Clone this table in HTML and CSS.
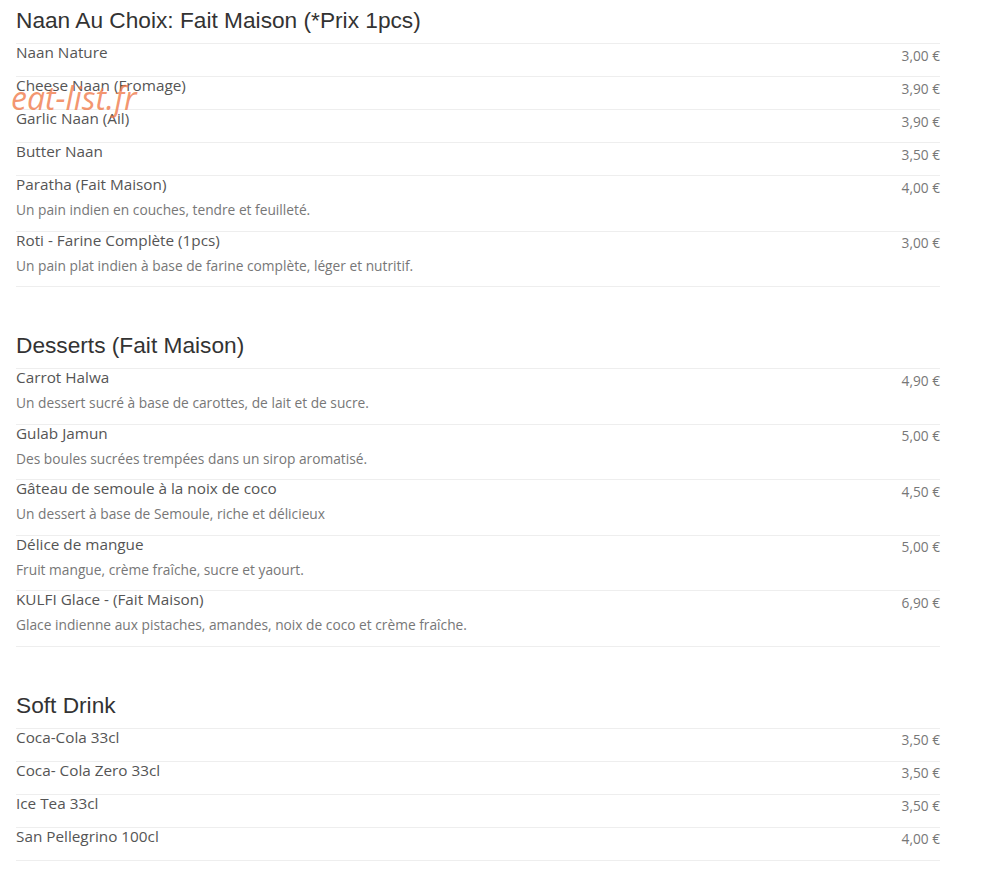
FILE: index.html
```html
<!DOCTYPE html>
<html lang="fr">
<head>
    <meta charset="utf-8">
    <link rel="stylesheet" href="styles.css">
</head>
<body>
    <div id="menu">
        <div class="watermark">eat-list.fr</div>

        <div class="section">
            <h2>Naan Au Choix: Fait Maison (*Prix 1pcs)</h2>
            <div class="item"><div class="info"><div class="name">Naan Nature</div></div><div class="price">3,00 €</div></div>
            <div class="item"><div class="info"><div class="name">Cheese Naan (Fromage)</div></div><div class="price">3,90 €</div></div>
            <div class="item"><div class="info"><div class="name">Garlic Naan (Ail)</div></div><div class="price">3,90 €</div></div>
            <div class="item"><div class="info"><div class="name">Butter Naan</div></div><div class="price">3,50 €</div></div>
            <div class="item"><div class="info"><div class="name">Paratha (Fait Maison)</div><div class="desc">Un pain indien en couches, tendre et feuilleté.</div></div><div class="price">4,00 €</div></div>
            <div class="item"><div class="info"><div class="name">Roti - Farine Complète (1pcs)</div><div class="desc">Un pain plat indien à base de farine complète, léger et nutritif.</div></div><div class="price">3,00 €</div></div>
        </div>

        <div class="section">
            <h2>Desserts (Fait Maison)</h2>
            <div class="item"><div class="info"><div class="name">Carrot Halwa</div><div class="desc">Un dessert sucré à base de carottes, de lait et de sucre.</div></div><div class="price">4,90 €</div></div>
            <div class="item"><div class="info"><div class="name">Gulab Jamun</div><div class="desc">Des boules sucrées trempées dans un sirop aromatisé.</div></div><div class="price">5,00 €</div></div>
            <div class="item"><div class="info"><div class="name">Gâteau de semoule à la noix de coco</div><div class="desc">Un dessert à base de Semoule, riche et délicieux</div></div><div class="price">4,50 €</div></div>
            <div class="item"><div class="info"><div class="name">Délice de mangue</div><div class="desc">Fruit mangue, crème fraîche, sucre et yaourt.</div></div><div class="price">5,00 €</div></div>
            <div class="item"><div class="info"><div class="name">KULFI Glace - (Fait Maison)</div><div class="desc">Glace indienne aux pistaches, amandes, noix de coco et crème fraîche.</div></div><div class="price">6,90 €</div></div>
        </div>

        <div class="section">
            <h2>Soft Drink</h2>
            <div class="item"><div class="info"><div class="name">Coca-Cola 33cl</div></div><div class="price">3,50 €</div></div>
            <div class="item"><div class="info"><div class="name">Coca- Cola Zero 33cl</div></div><div class="price">3,50 €</div></div>
            <div class="item"><div class="info"><div class="name">Ice Tea 33cl</div></div><div class="price">3,50 €</div></div>
            <div class="item"><div class="info"><div class="name">San Pellegrino 100cl</div></div><div class="price">4,00 €</div></div>
        </div>
    </div>
</body>
</html>
```

FILE: styles.css
```css
body {
    margin: 0;
    background: white;
    font-family: "Open Sans", "Liberation Sans", sans-serif;
}

#menu {
    position: relative;
    width: 924px;
    margin-left: 16px;
    padding-top: 7px;
}

.watermark {
    position: absolute;
    left: -5px;
    top: 78px;
    font-family: "Open Sans", sans-serif;
    font-style: italic;
    font-size: 32px;
    line-height: 40px;
    color: rgba(240, 115, 65, 0.75);
    pointer-events: none;
}

.section {
    border-bottom: 1px solid #eee;
    margin-bottom: 45px;
}

.section h2 {
    margin: 0 0 10px 0;
    font-family: "Liberation Sans", Arial, sans-serif;
    font-weight: normal;
    font-size: 22.7px;
    line-height: 26px;
    color: #333;
}

.item {
    display: flex;
    justify-content: space-between;
    align-items: flex-start;
    border-top: 1px solid #eee;
    padding-bottom: 16px;
}

.item .name {
    font-size: 15.3px;
    line-height: 15px;
    padding-top: 1px;
    color: #555;
}

.item .desc {
    font-size: 13.75px;
    line-height: 14px;
    margin-top: 11px;
    margin-bottom: -2.5px;
    color: #777;
}

.item .price {
    font-size: 13.7px;
    line-height: 16px;
    padding-top: 3.5px;
    margin-bottom: -4px;
    color: #777;
}
```
